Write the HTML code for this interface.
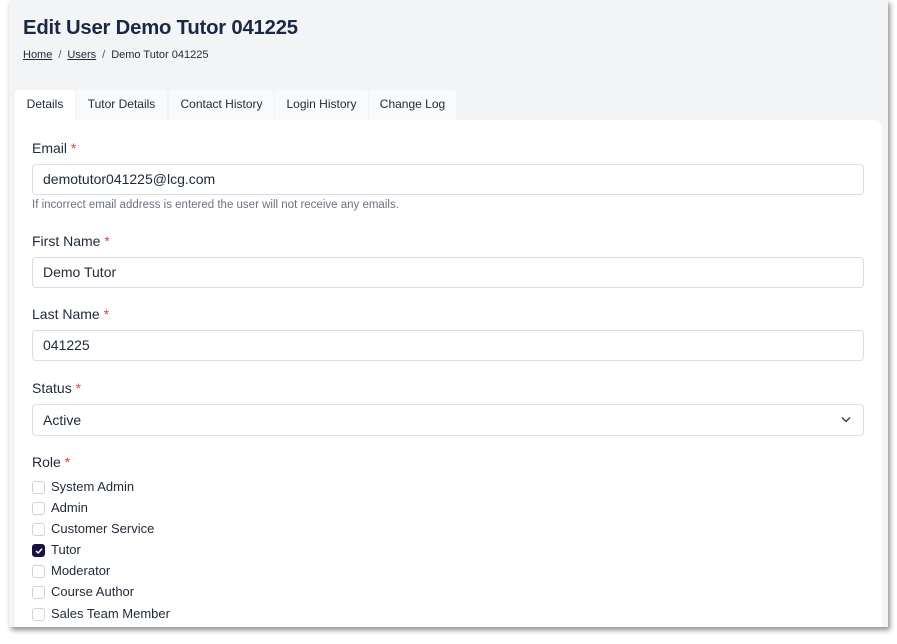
<!DOCTYPE html>
<html><head><meta charset="utf-8"><style>
*{box-sizing:border-box;margin:0;padding:0}
body{width:897px;height:644px;background:#fff;font-family:"Liberation Sans",sans-serif;position:relative;overflow:hidden}
.frame{position:absolute;left:9px;top:0;width:879px;height:627px;background:#f3f4f6;box-shadow:2px 3px 5px rgba(0,0,0,.45);overflow:hidden}
h1{position:absolute;left:14px;top:17px;font-size:20.3px;font-weight:bold;color:#1b2743;letter-spacing:-.2px}
.bc{position:absolute;left:14px;top:49px;font-size:11px;color:#1f2937}
.bc a{color:#1f2937;text-decoration:underline}
.bc span{margin:0 6px;color:#555}
.tab{position:absolute;top:90px;height:31px;background:#f9fafb;border-radius:4px 4px 0 0;font-size:12px;color:#1f2937;text-align:center;line-height:29px}
.card{position:absolute;left:6px;top:120px;width:867px;height:520px;background:#fff;border-radius:0 10px 0 0}
.lbl{position:absolute;left:17px;font-size:14px;color:#1f2937}
.lbl b{color:#e53e3e;font-weight:normal}
.inp{position:absolute;left:17px;width:832px;height:31px;border:1px solid #d9dde3;border-radius:4px;font-size:14px;color:#1f2937;padding-left:10px;line-height:29px}
.help{position:absolute;left:17px;top:79px;font-size:11.5px;color:#6b7280}
.cb{position:absolute;left:17px;font-size:13px;color:#1f2937;height:16px;line-height:16px}
.cb i{position:absolute;left:0;top:2px;width:13px;height:13px;border:1px solid #cfd3d9;border-radius:3px;background:#fff}
.cb i.on{background:#1a1240;border-color:#1a1240}
.cb span{position:absolute;left:19px;white-space:nowrap}
</style></head><body>
<div class="frame">
<h1>Edit User Demo Tutor 041225</h1>
<div class="bc"><a>Home</a><span>/</span><a>Users</a><span>/</span>Demo Tutor 041225</div>
<div class="tab" style="left:6px;width:60px;background:#fff;z-index:2;height:32px">Details</div>
<div class="tab" style="left:67px;width:91px">Tutor Details</div>
<div class="tab" style="left:160px;width:105px">Contact History</div>
<div class="tab" style="left:266px;width:93px">Login History</div>
<div class="tab" style="left:360px;width:87px">Change Log</div>
<div class="card">
<div class="lbl" style="top:20px">Email <b>*</b></div>
<div class="inp" style="top:44px">demotutor041225@lcg.com</div>
<div class="help">If incorrect email address is entered the user will not receive any emails.</div>
<div class="lbl" style="top:113px">First Name <b>*</b></div>
<div class="inp" style="top:137px">Demo Tutor</div>
<div class="lbl" style="top:186px">Last Name <b>*</b></div>
<div class="inp" style="top:210px">041225</div>
<div class="lbl" style="top:260px">Status <b>*</b></div>
<div class="inp" style="top:284px;height:32px;line-height:30px">Active<svg style="position:absolute;right:12px;top:11px" width="10" height="7" viewBox="0 0 10 7"><path d="M1 1.5L5 5.5L9 1.5" fill="none" stroke="#374151" stroke-width="1.5"/></svg></div>
<div class="lbl" style="top:334px">Role <b>*</b></div>
<div class="cb" style="top:359px"><i></i><span>System Admin</span></div>
<div class="cb" style="top:380px"><i></i><span>Admin</span></div>
<div class="cb" style="top:401px"><i></i><span>Customer Service</span></div>
<div class="cb" style="top:422px"><i class="on"><svg style="position:absolute;left:2px;top:2px" width="8" height="8" viewBox="0 0 8 8"><path d="M1 4L3.2 6L7 1.8" fill="none" stroke="#fff" stroke-width="1.5"/></svg></i><span>Tutor</span></div>
<div class="cb" style="top:443px"><i></i><span>Moderator</span></div>
<div class="cb" style="top:464px"><i></i><span>Course Author</span></div>
<div class="cb" style="top:486px"><i></i><span>Sales Team Member</span></div>
</div>
</div>
</body></html>
